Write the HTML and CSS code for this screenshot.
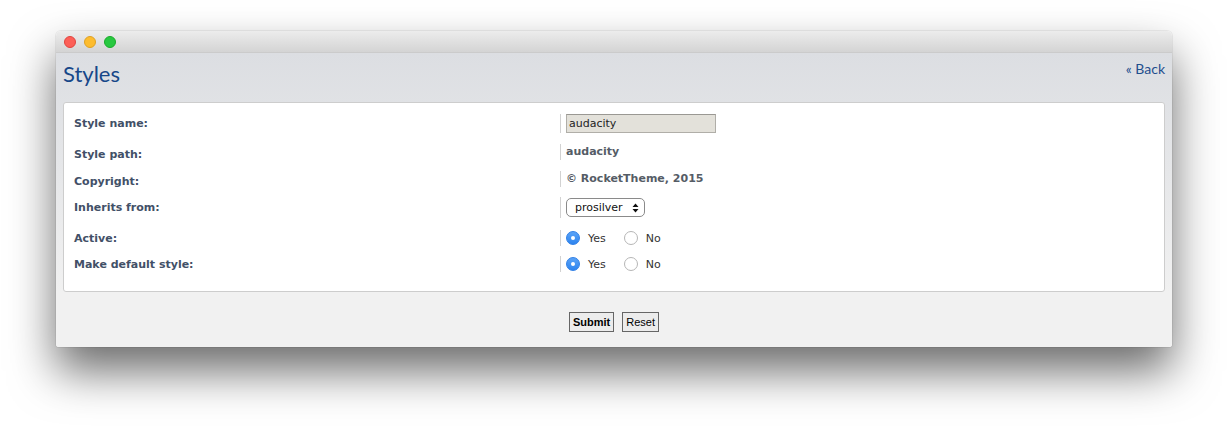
FILE: index.html
```html
<!DOCTYPE html>
<html lang="en">
<head>
<meta charset="utf-8">
<title>Styles</title>
<link rel="stylesheet" href="styles.css">
</head>
<body>
<div class="window">
  <div class="titlebar">
    <span class="light light--red"></span>
    <span class="light light--yellow"></span>
    <span class="light light--green"></span>
  </div>
  <div class="content">
    <div class="header">
      <h1 class="title">Styles</h1>
      <a class="back" href="#">« Back</a>
    </div>
    <div class="panel">
      <div class="row">
        <div class="label">Style name:</div>
        <div class="value"><input class="text-input" type="text" value="audacity"></div>
      </div>
      <div class="row row--text row--gap11">
        <div class="label">Style path:</div>
        <div class="value value--text">audacity</div>
      </div>
      <div class="row row--text">
        <div class="label">Copyright:</div>
        <div class="value value--text">© RocketTheme, 2015</div>
      </div>
      <div class="row row--gap9">
        <div class="label">Inherits from:</div>
        <div class="value">
          <div class="select">prosilver
            <svg class="select-arrows" width="7" height="10" viewBox="0 0 7 10"><path d="M3.5 0.5 L6.5 4 H0.5 Z M3.5 9.5 L6.5 6 H0.5 Z" fill="#111"/></svg>
          </div>
        </div>
      </div>
      <div class="row row--gap12">
        <div class="label">Active:</div>
        <div class="value">
          <label class="radio"><span class="radio-dot radio-dot--on"></span>Yes</label>
          <label class="radio"><span class="radio-dot"></span>No</label>
        </div>
      </div>
      <div class="row">
        <div class="label">Make default style:</div>
        <div class="value">
          <label class="radio"><span class="radio-dot radio-dot--on"></span>Yes</label>
          <label class="radio"><span class="radio-dot"></span>No</label>
        </div>
      </div>
    </div>
    <div class="buttons">
      <button class="btn btn--primary" type="button">Submit</button>
      <button class="btn" type="button">Reset</button>
    </div>
  </div>
</div>
</body>
</html>
```

FILE: styles.css
```css
* { box-sizing: border-box; }

html, body { min-height: 428px; }

body {
  margin: 0;
  padding: 31px 0 81px 56px;
  background: #ffffff;
  font-family: "DejaVu Sans", Verdana, sans-serif;
}

.window {
  width: 1116px;
  height: 316px;
  border-radius: 5px 5px 3px 3px;
  overflow: hidden;
  box-shadow: 0 24px 46px rgba(0, 0, 0, 0.58), 0 0 0 1px rgba(0, 0, 0, 0.06);
  display: flex;
  flex-direction: column;
}

.titlebar {
  height: 22px;
  flex: none;
  background: linear-gradient(#ececec, #d4d4d4);
  border-bottom: 1px solid #cbcbcb;
  display: flex;
  align-items: center;
  gap: 8px;
  padding-left: 8px;
}

.light {
  width: 12px;
  height: 12px;
  border-radius: 50%;
}
.light--red { background: #fc5f57; border: 1px solid #e0443e; }
.light--yellow { background: #fdbc2e; border: 1px solid #dea123; }
.light--green { background: #28c840; border: 1px solid #1aab29; }

.content {
  flex: 1;
  background: linear-gradient(#dcdee2 0px, #e6e7e9 120px, #f1f1f1 240px, #f1f1f1 100%);
  display: flex;
  flex-direction: column;
}

.header {
  display: flex;
  justify-content: space-between;
  align-items: flex-start;
  padding: 8px 7px 0 7px;
  height: 49px;
}

.title {
  margin: 0;
  font-family: Lato, "Open Sans", sans-serif;
  font-weight: normal;
  font-size: 22px;
  line-height: 26px;
  color: #174789;
}

.back {
  font-family: Lato, "Open Sans", sans-serif;
  font-size: 14px;
  line-height: 17px;
  color: #1f4f8e;
  text-decoration: none;
  margin-top: -1px;
}

.panel {
  margin: 0 7px;
  background: #ffffff;
  border: 1px solid #cdcdcd;
  border-radius: 3px;
  padding: 11px 0 19px 0;
  display: flex;
  flex-direction: column;
}

.row {
  display: grid;
  grid-template-columns: 496px 1fr;
  align-items: center;
}
.row + .row { margin-top: 10px; }
.row.row--gap11 { margin-top: 11px; }
.row.row--gap9 { margin-top: 9px; }
.row.row--gap12 { margin-top: 12px; }

.row--text { align-items: start; }
.row--text .label { padding-top: 4px; }

.label {
  padding-left: 10px;
  font-weight: bold;
  font-size: 11px;
  line-height: 13px;
  color: #425067;
}

.value {
  border-left: 1px solid #d2d2d2;
  padding-left: 5px;
  min-height: 16px;
  display: flex;
  align-items: center;
  font-size: 11px;
  color: #333;
}

.value--text {
  font-weight: bold;
  color: #555c66;
  line-height: 16px;
}

.text-input {
  width: 150px;
  height: 19px;
  margin: 0;
  padding: 0 2px;
  border: 1px solid #b0aea8;
  border-top-color: #9a9893;
  background: #e3e1da;
  font-family: "DejaVu Sans", Verdana, sans-serif;
  font-size: 11px;
  color: #222;
}

.select {
  width: 79px;
  height: 19px;
  margin: 1px 0;
  border: 1px solid #8a8a8a;
  border-radius: 5px;
  background: #fff;
  font-size: 11px;
  color: #111;
  display: flex;
  align-items: center;
  justify-content: space-between;
  padding: 0 5px 0 8px;
}

.select-arrows { display: block; }

.radio {
  display: flex;
  align-items: center;
  font-size: 11px;
  color: #333;
  margin-right: 18px;
}

.radio-dot {
  width: 14px;
  height: 14px;
  border-radius: 50%;
  border: 1px solid #b6b6b6;
  background: #fff;
  margin-right: 8px;
  display: inline-flex;
  align-items: center;
  justify-content: center;
}

.radio-dot--on {
  border-color: #2f7fe6;
  background: linear-gradient(#5aa3f7, #2e85ef);
}
.radio-dot--on::after {
  content: "";
  width: 4px;
  height: 4px;
  border-radius: 50%;
  background: #fff;
}

.buttons {
  display: flex;
  justify-content: center;
  gap: 8px;
  margin-top: 20px;
}

.btn {
  height: 20px;
  margin: 0;
  padding: 0 3px;
  border: 1px solid #666;
  border-radius: 0;
  background: #ececec;
  font-family: "Liberation Sans", Arial, sans-serif;
  font-size: 11px;
  color: #000;
}
.btn--primary { font-weight: bold; }
```
